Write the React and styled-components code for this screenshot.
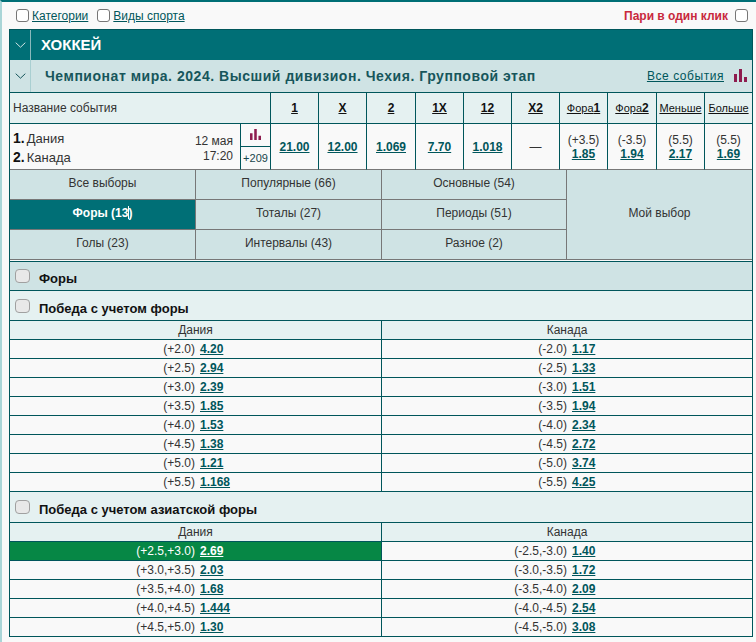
import React from "react";
import styled, { createGlobalStyle } from "styled-components";

const Global = createGlobalStyle`
  html, body { margin: 0; padding: 0; background: #f9f9f9; }
  body { font-family: "Liberation Sans", Arial, sans-serif; font-size: 12px; color: #333; overflow: hidden; }
  * { box-sizing: border-box; }
`;
const TEAL = "#006f76";
const LINE = "#00565b";
const Page = styled.div`
  min-height: 642px; border-top: 2px solid ${TEAL}; border-left: 2px solid #a9d5d7; padding: 0 2px 0 7px;
`;
const Toolbar = styled.div`
  height: 27px; display: flex; align-items: center; gap: 9px; padding-left: 7px; padding-right: 6px;
`;
const Check = styled.input.attrs({ type: "checkbox" })`
  appearance: none; margin: 0; width: 13px; height: 13px; border: 1px solid #767676; border-radius: 3px; background: #fff; flex: none;
`;
const GreyCheck = styled(Check)`
  width: 15px; height: 14px; background: #e8e8e8; border-color: #a0a0a0; border-radius: 4px;
`;
const Filter = styled.label`
  display: flex; align-items: center; gap: 3px; color: #00565b; text-decoration: underline;
`;
const OneClick = styled.label`
  margin-left: auto; display: flex; align-items: center; gap: 7px; color: #c8283c; font-weight: 700; font-size: 12px;
`;
const Card = styled.div` border: solid ${LINE}; border-width: 1px 1px 0 1px; width: 744px; `;
const SportBar = styled.div`
  height: 30px; background: ${TEAL}; display: flex; align-items: stretch; color: #fff;
`;
const ChevronCell = styled.div`
  width: 21px; display: flex; align-items: center; justify-content: center; border-right: 1px solid ${p => p.$light ? "#a9cfd1" : "#8ab9bc"}; flex: none;
`;
const SportName = styled.div` font-size: 15px; font-weight: 700; padding-left: 10px; line-height: 30px; `;
const LeagueBar = styled.div`
  height: 33px; background: #cfe3e4; display: flex; align-items: stretch; border-bottom: 1px solid ${LINE};
`;
const LeagueName = styled.div`
  font-size: 14px; font-weight: 700; color: #17565b; padding-left: 14px; line-height: 32px; letter-spacing: 0.53px; white-space: nowrap;
`;
const AllEvents = styled.a`
  margin-left: auto; align-self: center; color: #00565b; text-decoration: underline; font-size: 12px; letter-spacing: 0.55px;
`;
const MarketGrid = styled.div`
  display: grid;
  grid-template-columns: 230px 30px 48px 48px 49px 48px 48px 48px 48px 49px 48px 48px;
`;
const HeadCell = styled.div`
  height: 31px; display: flex; align-items: center; justify-content: center; background: #e5f1f1; border-left: 1px solid ${LINE};
  color: #111; border-bottom: 1px solid ${LINE}; text-decoration: underline; font-weight: ${p => p.$small ? 400 : 700}; font-size: ${p => p.$small ? "11px" : "12px"};
  white-space: nowrap;
  b { font-size: 12px; }
`;
const NameHead = styled(HeadCell)`
  grid-column: 1 / 3; justify-content: flex-start; border-left: 0; text-decoration: none; font-weight: 400; padding-left: 3px; color: #333;
`;
const EventCell = styled.div`
  height: 46px; border-left: 1px solid ${LINE}; border-bottom: 1px solid #777; background: #f9f9f9;
  display: flex; flex-direction: column; align-items: center; justify-content: center; line-height: 14px;
`;
const Teams = styled(EventCell)`
  border-left: 0; flex-direction: row; justify-content: space-between; padding: 3px 7px 0 3px;
`;
const TeamNames = styled.div` white-space: nowrap; font-size: 13px; line-height: 18px; `;
const TeamNo = styled.b` font-size: 14px; margin-right: 2px; color: #111; `;
const Times = styled.div` text-align: right; white-space: nowrap; line-height: 15px; padding-top: 1px; `;
const StatsCell = styled(EventCell)` justify-content: flex-start; `;
const StatsTop = styled.div` height: 23px; width: 100%; display: flex; align-items: center; justify-content: center; padding-bottom: 1px; border-bottom: 1px solid ${LINE}; `;
const StatsMore = styled.div` flex: 1; display: flex; align-items: center; justify-content: center; font-size: 11px; color: #17464b; `;
const Odd = styled.a` color: #00565b; font-weight: 700; text-decoration: underline; font-size: 12px; `;
const Tabs = styled.div`
  display: grid; grid-template-columns: 186px 186px 185px 185px; grid-template-rows: repeat(3, 30px); background: #cfe3e4;
`;
const Tab = styled.div`
  display: flex; align-items: center; justify-content: center; padding-bottom: 3px;
  border-right: 1px solid #777; border-bottom: 1px solid #777;
  background: ${p => p.$active ? TEAL : "transparent"}; color: ${p => p.$active ? "#fff" : "#333"}; font-weight: ${p => p.$active ? 700 : 400};
`;
const MyTab = styled(Tab)` grid-column: 4; grid-row: 1 / 4; border-right: 0; `;
const TabLabel = styled.span` position: relative; `;
const Caret = styled.i`
  position: absolute; right: 3px; top: 0; width: 1px; height: 13px; background: #fff;
`;
const Gap = styled.div` height: 2px; background: #f9f9f9; border-bottom: 1px solid ${LINE}; `;
const Group = styled.div`
  display: flex; align-items: center; gap: 9px; padding-left: 5px; font-weight: 700; font-size: 13px; color: #111;
  height: ${p => p.$h}px; background: ${p => p.$dark ? "#cfe3e4" : "#e5f1f1"}; border-bottom: 1px solid ${LINE};
`;
const GroupTitle = styled.span` padding-top: 5px; `;
const OddsTable = styled.div` display: grid; grid-template-columns: 371px 371px; `;
const TeamHead = styled.div`
  height: 19px; background: #e5f1f1; text-align: center; line-height: 18px; border-bottom: 1px solid ${LINE}; color: #333;
  & + & { border-left: 1px solid ${LINE}; }
`;
const OddCell = styled.div`
  height: 19px; display: grid; grid-template-columns: 185px 1fr; column-gap: 5px; align-items: center; border-bottom: 1px solid ${LINE};
  background: ${p => p.$hit ? "#068745" : "#f9f9f9"}; color: ${p => p.$hit ? "#fff" : "#333"};
  border-left: ${p => p.$right ? `1px solid ${LINE}` : "0"};
  ${Odd} { color: ${p => p.$hit ? "#fff" : "#00565b"}; }
`;
const Param = styled.span` text-align: right; `;
const Chevron = ({ color }) => (
  <svg width="11" height="6" viewBox="0 0 11 6"><polyline points="0.7,0.7 5.5,5.2 10.3,0.7" fill="none" stroke={color} strokeWidth="1" /></svg>
);
const Bars = ({ w, h, className }) => (
  <svg className={className} width={w} height={h} viewBox="0 0 13 13"><path d="M0 5h3v8H0zM5 0h3v13H5zM10 8h3v5h-3z" fill="#8e1c4e" /></svg>
);
const BigBars = styled(Bars)` align-self: center; margin: 0 5px 2px 10px; `;
const heads = ["1", "X", "2", "1X", "12", "X2"];
const lines = ["21.00", "12.00", "1.069", "7.70", "1.018"];
const handicap = [["(+3.5)", "1.85"], ["(-3.5)", "1.94"], ["(5.5)", "2.17"], ["(5.5)", "1.69"]];
const tabs = [
  ["Все выборы"], ["Популярные (66)"], ["Основные (54)"],
  ["Форы (13)", true], ["Тоталы (27)"], ["Периоды (51)"],
  ["Голы (23)"], ["Интервалы (43)"], ["Разное (2)"],
];
const win = [
  ["(+2.0)", "4.20", "(-2.0)", "1.17"], ["(+2.5)", "2.94", "(-2.5)", "1.33"], ["(+3.0)", "2.39", "(-3.0)", "1.51"],
  ["(+3.5)", "1.85", "(-3.5)", "1.94"], ["(+4.0)", "1.53", "(-4.0)", "2.34"], ["(+4.5)", "1.38", "(-4.5)", "2.72"],
  ["(+5.0)", "1.21", "(-5.0)", "3.74"], ["(+5.5)", "1.168", "(-5.5)", "4.25"],
];
const asian = [
  ["(+2.5,+3.0)", "2.69", "(-2.5,-3.0)", "1.40", true], ["(+3.0,+3.5)", "2.03", "(-3.0,-3.5)", "1.72"],
  ["(+3.5,+4.0)", "1.68", "(-3.5,-4.0)", "2.09"], ["(+4.0,+4.5)", "1.444", "(-4.0,-4.5)", "2.54"],
  ["(+4.5,+5.0)", "1.30", "(-4.5,-5.0)", "3.08"],
];
const Odds = ({ rows }) => (
  <OddsTable>
    <TeamHead>Дания</TeamHead>
    <TeamHead>Канада</TeamHead>
    {rows.map(r => (
      <React.Fragment key={r[0]}>
        <OddCell $hit={r[4]}><Param>{r[0]}</Param><span><Odd>{r[1]}</Odd></span></OddCell>
        <OddCell $right><Param>{r[2]}</Param><span><Odd>{r[3]}</Odd></span></OddCell>
      </React.Fragment>
    ))}
  </OddsTable>
);
const TabItem = ({ label, active }) => (
  <Tab $active={active}><TabLabel>{label}{active && <Caret />}</TabLabel></Tab>
);
export default function App() {
  return (
    <Page>
      <Global />
      <Toolbar>
        <Filter><Check />Категории</Filter>
        <Filter><Check />Виды спорта</Filter>
        <OneClick>Пари в один клик <Check /></OneClick>
      </Toolbar>
      <Card>
        <SportBar>
          <ChevronCell><Chevron color="#cfe3e4" /></ChevronCell>
          <SportName>ХОККЕЙ</SportName>
        </SportBar>
        <LeagueBar>
          <ChevronCell $light><Chevron color="#17565b" /></ChevronCell>
          <LeagueName>Чемпионат мира. 2024. Высший дивизион. Чехия. Групповой этап</LeagueName>
          <AllEvents>Все события</AllEvents>
          <BigBars w={13} h={13} />
        </LeagueBar>
        <MarketGrid>
          <NameHead>Название события</NameHead>
          {heads.map(h => <HeadCell key={h}>{h}</HeadCell>)}
          <HeadCell $small>Фора<b>1</b></HeadCell>
          <HeadCell $small>Фора<b>2</b></HeadCell>
          <HeadCell $small>Меньше</HeadCell>
          <HeadCell $small>Больше</HeadCell>
          <Teams>
            <TeamNames><TeamNo>1.</TeamNo>Дания<br /><TeamNo>2.</TeamNo>Канада</TeamNames>
            <Times>12 мая<br />17:20</Times>
          </Teams>
          <StatsCell>
            <StatsTop><Bars w={11} h={11} /></StatsTop>
            <StatsMore>+209</StatsMore>
          </StatsCell>
          {lines.map(l => <EventCell key={l}><Odd>{l}</Odd></EventCell>)}
          <EventCell>—</EventCell>
          {handicap.map(([a, b], i) => <EventCell key={i}>{a}<Odd>{b}</Odd></EventCell>)}
        </MarketGrid>
        <Tabs>
          {tabs.slice(0, 3).map(([t, a]) => <TabItem key={t} label={t} active={a} />)}
          <MyTab>Мой выбор</MyTab>
          {tabs.slice(3).map(([t, a]) => <TabItem key={t} label={t} active={a} />)}
        </Tabs>
        <Gap />
        <Group $dark $h={29}><GreyCheck /><GroupTitle>Форы</GroupTitle></Group>
        <Group $h={30}><GreyCheck /><GroupTitle>Победа с учетом форы</GroupTitle></Group>
        <Odds rows={win} />
        <Group $h={31}><GreyCheck /><GroupTitle>Победа с учетом азиатской форы</GroupTitle></Group>
        <Odds rows={asian} />
      </Card>
    </Page>
  );
}
